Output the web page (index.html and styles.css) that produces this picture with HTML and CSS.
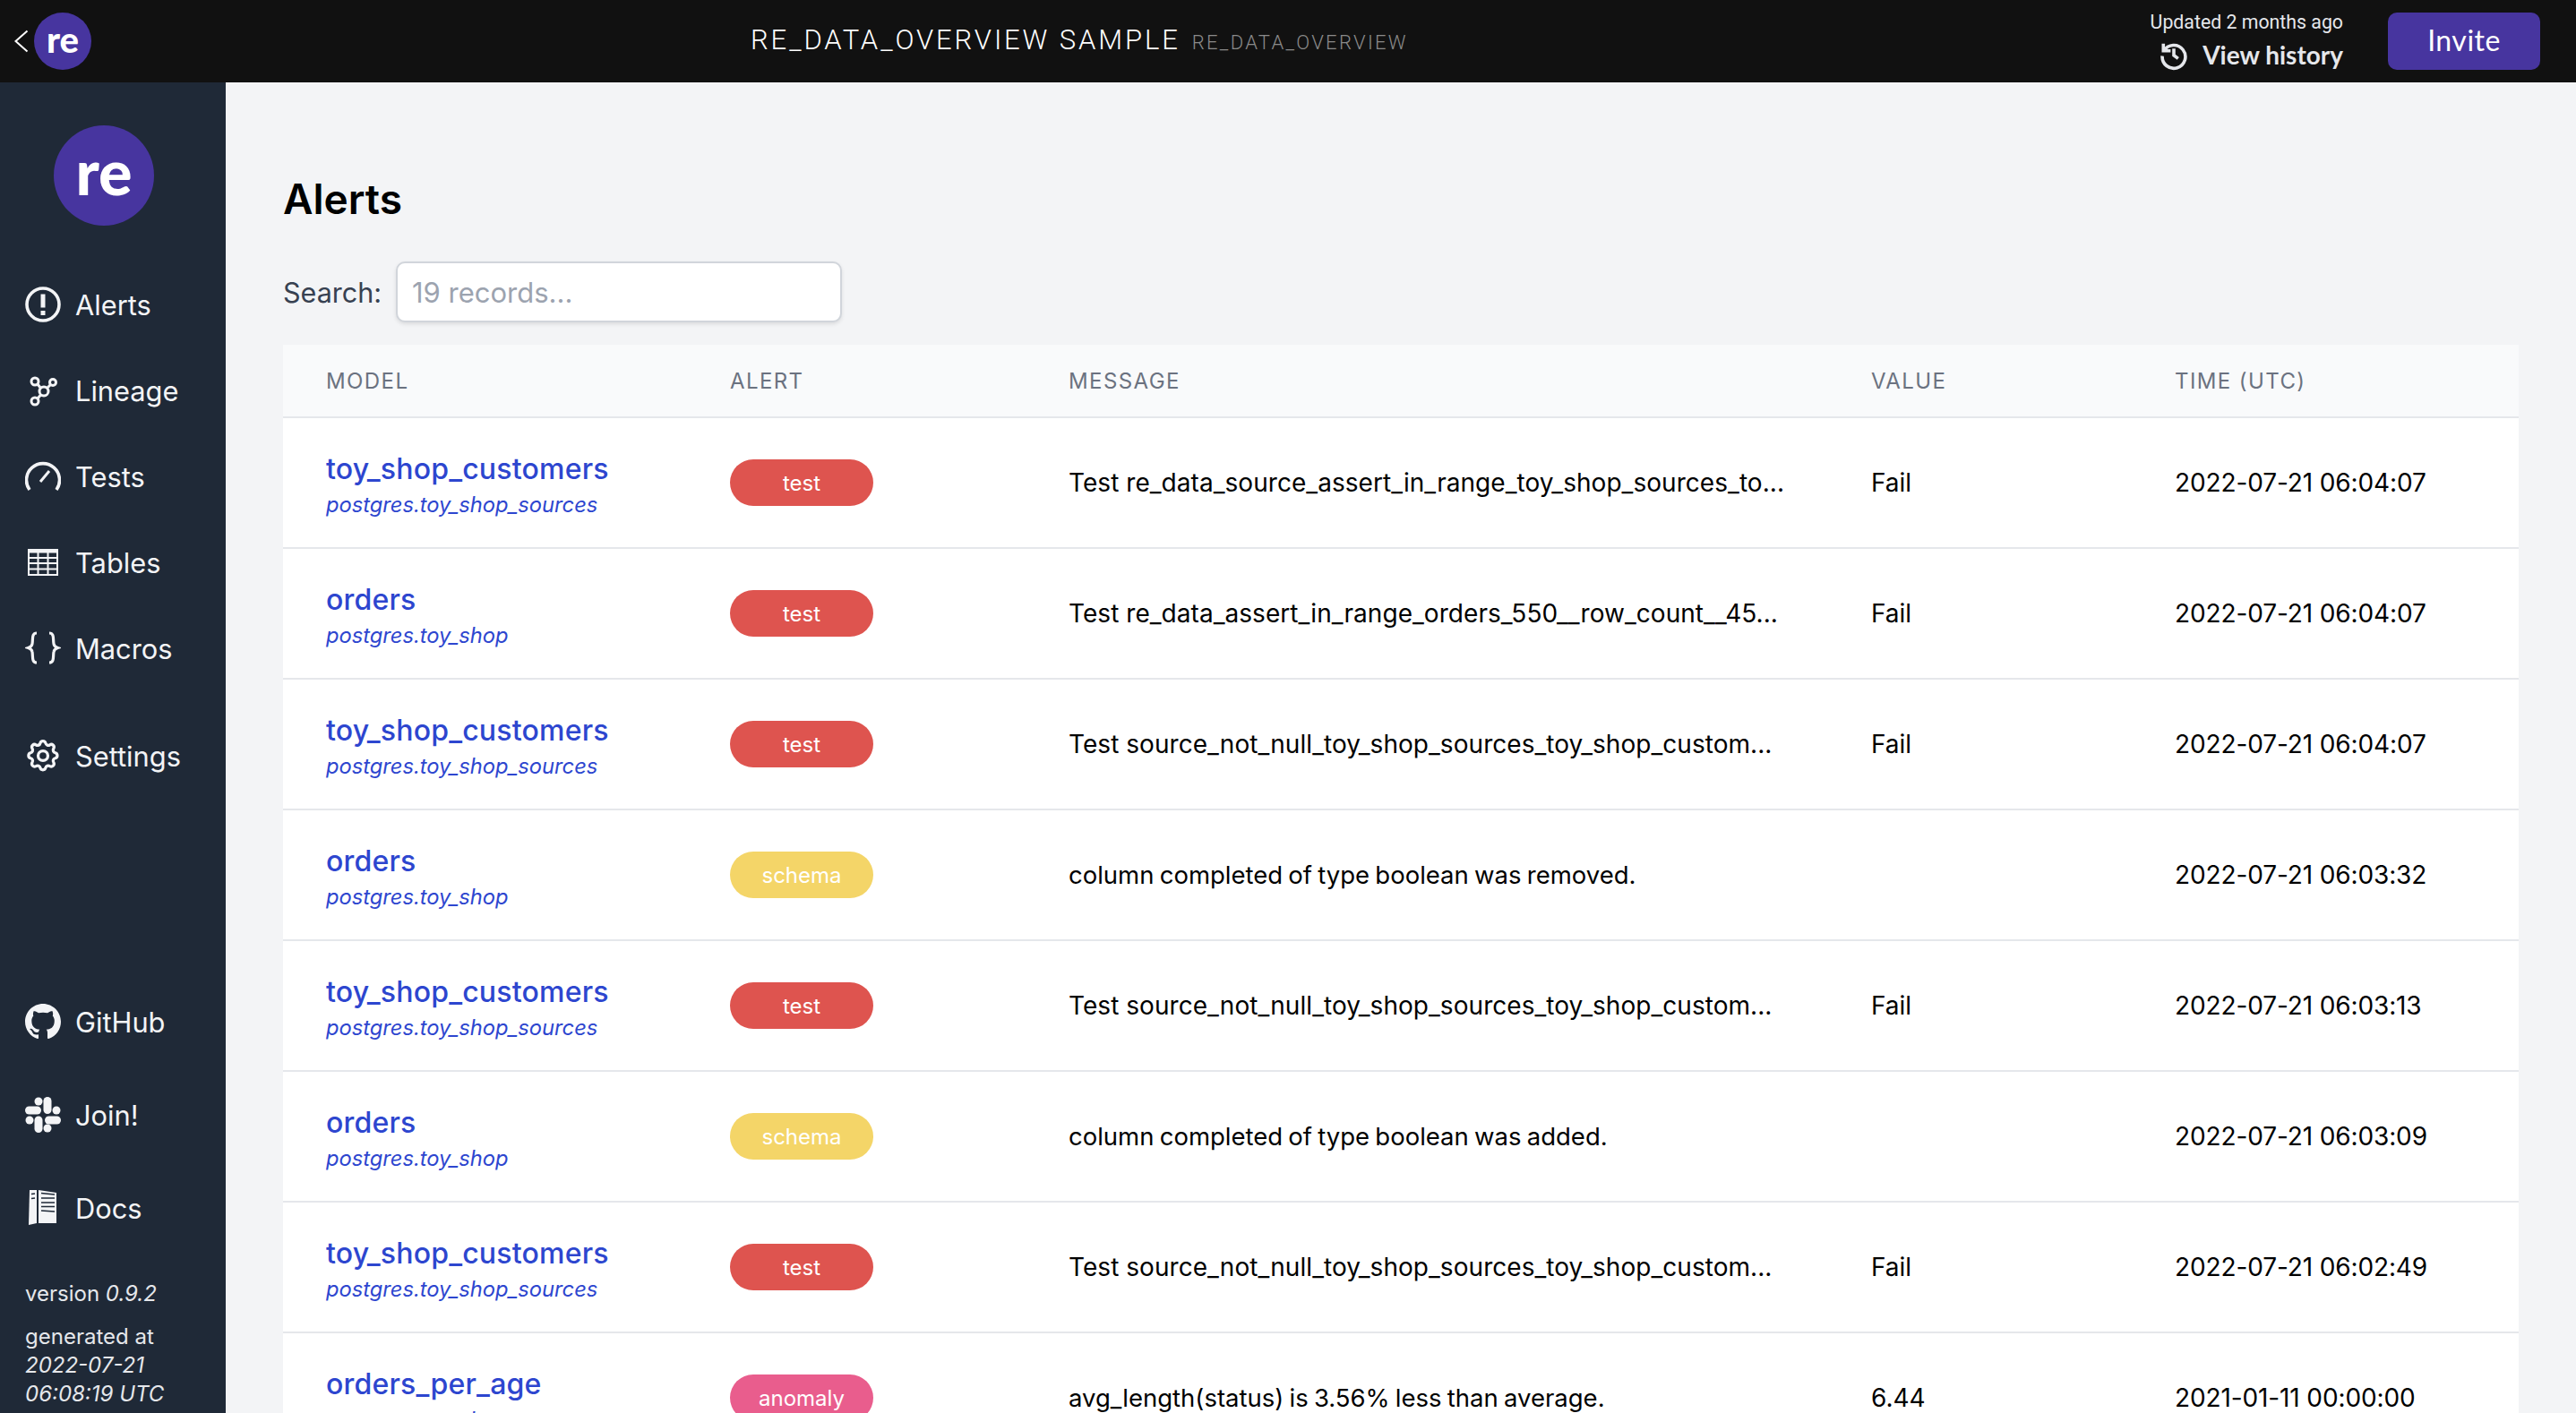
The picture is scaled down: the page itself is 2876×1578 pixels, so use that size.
FILE: index.html
```html
<!DOCTYPE html>
<html lang="en">
<head>
    <meta charset="UTF-8">
    <meta name="viewport" content="width=device-width, initial-scale=1.0">
    <title>re_data overview</title>
    <link rel="stylesheet" href="styles.css">
</head>
<body>

    <!-- Top bar -->
    <header class="topbar">
        <div class="topbar-left">
            <svg class="back-icon" viewBox="0 0 16 28"><path d="M14.500 2.500 L1.500 14 L14.500 25.500" fill="none" stroke="#fff" stroke-width="2"/></svg>
            <div class="logo logo-small">re</div>
        </div>
        <div class="topbar-title">
            <span class="title-main">RE_DATA_OVERVIEW SAMPLE</span>
            <span class="title-sub">RE_DATA_OVERVIEW</span>
        </div>
        <div class="topbar-right">
            <div class="updated">
                <div class="updated-text">Updated 2 months ago</div>
                <div class="history">
                    <svg class="history-icon" viewBox="0 0 24 24"><path d="M4.200 3.800v5.400h5.400M4.600 9.200A8.600 8.600 0 1 1 3.400 13M12 7.500V12.500l3.200 2.400" fill="none" stroke="#e5e7eb" stroke-width="2.400"/></svg>
                    <span>View history</span>
                </div>
            </div>
            <div class="invite">Invite</div>
        </div>
    </header>

    <div class="layout">
        <!-- Sidebar -->
        <aside class="sidebar">
            <div class="logo logo-big">re</div>

            <nav class="nav-group">
                <a class="nav-item">
                    <svg class="nav-icon" viewBox="0 0 40 40"><circle cx="20" cy="20" r="18" fill="none" stroke="#f3f4f6" stroke-width="3.600"/><path d="M20 8.500v15" stroke="#f3f4f6" stroke-width="5"/><path d="M17.500 27h5v5h-5z" fill="#f3f4f6"/></svg>
                    Alerts
                </a>
                <a class="nav-item">
                    <svg class="nav-icon" viewBox="0 0 40 40" fill="none" stroke="#f3f4f6" stroke-width="3"><circle cx="11" cy="10" r="4"/><circle cx="31" cy="11" r="3.500"/><circle cx="21" cy="21" r="5"/><circle cx="11" cy="32" r="4"/><path d="M14 13 17.500 17.500M28.500 13.500 24.500 17.500M17.500 25 14 29"/></svg>
                    Lineage
                </a>
                <a class="nav-item">
                    <svg class="nav-icon" viewBox="0 0 40 40" fill="none" stroke="#f3f4f6" stroke-width="3.600"><path d="M5 35A18.500 18.500 0 1 1 35 35"/><path d="M17 26 27 14" stroke-width="3"/></svg>
                    Tests
                </a>
                <a class="nav-item">
                    <svg class="nav-icon" viewBox="0 0 40 40" fill="none" stroke="#f3f4f6" stroke-width="2"><path d="M4 6h32v28H4z"/><path d="M4 7.500h32" stroke-width="4"/><path d="M4 15h32M4 21h32M4 27.500h32M14.500 7v27M25.500 7v27"/></svg>
                    Tables
                </a>
                <a class="nav-item">
                    <svg class="nav-icon" viewBox="0 0 40 40" fill="none" stroke="#f3f4f6" stroke-width="3.200"><path d="M13 3C7 3 9 10 8 15C7.500 18 5 19 3.500 19.500C5 20 7.500 21 8 24C9 29 7 36 13 36"/><path d="M27 3C33 3 31 10 32 15C32.500 18 35 19 36.500 19.500C35 20 32.500 21 32 24C31 29 33 36 27 36"/></svg>
                    Macros
                </a>
            </nav>

            <nav class="nav-group nav-settings">
                <a class="nav-item">
                    <svg class="nav-icon" viewBox="1 0 22 22" fill="none" stroke="#f3f4f6" stroke-width="1.800"><path d="M10.300 3.300c.4-1.700 2.900-1.700 3.300 0a1.700 1.700 0 0 0 2.600 1c1.500-.9 3.200.8 2.300 2.300a1.700 1.700 0 0 0 1 2.600c1.700.4 1.700 2.900 0 3.300a1.700 1.700 0 0 0-1 2.600c.9 1.500-.8 3.200-2.300 2.300a1.700 1.700 0 0 0-2.600 1c-.4 1.700-2.900 1.700-3.300 0a1.700 1.700 0 0 0-2.600-1c-1.500.9-3.200-.8-2.300-2.300a1.700 1.700 0 0 0-1-2.600c-1.700-.4-1.700-2.900 0-3.300a1.700 1.700 0 0 0 1-2.600c-.9-1.500.8-3.200 2.300-2.300a1.700 1.700 0 0 0 2.600-1z"/><circle cx="12" cy="11" r="3"/></svg>
                    Settings
                </a>
            </nav>

            <nav class="nav-group nav-links">
                <a class="nav-item">
                    <svg class="nav-icon" viewBox="0 0 16 16"><path fill="#f3f4f6" d="M8 0C3.580 0 0 3.580 0 8c0 3.540 2.290 6.530 5.470 7.590.4.070.55-.17.55-.38 0-.19-.01-.82-.01-1.490-2.010.37-2.530-.49-2.690-.94-.09-.23-.48-.94-.82-1.130-.28-.15-.68-.52-.01-.53.63-.01 1.080.58 1.230.82.720 1.210 1.870.870 2.330.660.070-.520.280-.870.510-1.070-1.780-.2-3.640-.890-3.640-3.950 0-.870.310-1.590.820-2.150-.080-.2-.360-1.020.080-2.120 0 0 .670-.210 2.200.820.640-.180 1.320-.270 2-.270s1.360.090 2 .270c1.530-1.040 2.200-.820 2.200-.820.440 1.100.160 1.920.080 2.120.510.560.820 1.270.820 2.150 0 3.070-1.870 3.750-3.650 3.950.290.250.540.730.540 1.480 0 1.070-.010 1.930-.010 2.200 0 .210.150.460.550.380A8.010 8.010 0 0 0 16 8c0-4.420-3.580-8-8-8z"/></svg>
                    GitHub
                </a>
                <a class="nav-item">
                    <svg class="nav-icon" viewBox="0 0 40 40" fill="#f3f4f6"><circle cx="15" cy="5" r="4.500"/><rect x="20.500" y="0" width="9" height="19" rx="4.500"/><rect x="0" y="10.500" width="18" height="9" rx="4.500"/><circle cx="35" cy="15" r="4.500"/><rect x="22" y="21.500" width="18" height="9" rx="4.500"/><rect x="10.500" y="21.500" width="9" height="18.500" rx="4.500"/><circle cx="5" cy="26" r="4.500"/><circle cx="25" cy="35" r="4.500"/></svg>
                    Join!
                </a>
                <a class="nav-item">
                    <svg class="nav-icon" viewBox="0 0 40 40"><path fill="#f3f4f6" d="M5 0h8v37l-9 2z"/><path fill="#f3f4f6" d="M15 0l20 3v34H15z"/><path stroke="#1f2937" stroke-width="1.500" d="M18 3.500l15 1.500M18 9h15M18 14h15M18 18.500h15M18 23l15 1M7 4.500l4-.5M7 9.500l4-.5"/></svg>
                    Docs
                </a>
            </nav>

            <div class="version">version <em>0.9.2</em></div>
            <div class="generated">generated at<br><em>2022-07-21</em><br><em>06:08:19 UTC</em></div>
        </aside>

        <!-- Main content -->
        <main class="content">
            <h1>Alerts</h1>
            <div class="search">
                <label for="search">Search:</label>
                <input type="text" id="search" placeholder="19 records...">
            </div>

            <table class="alerts">
                <colgroup>
                    <col class="col-model"><col class="col-alert"><col class="col-message"><col class="col-value"><col class="col-time">
                </colgroup>
                <thead>
                    <tr><th>Model</th><th>Alert</th><th>Message</th><th>Value</th><th>Time (UTC)</th></tr>
                </thead>
                <tbody>
                    <tr>
                        <td class="model"><a class="model-name">toy_shop_customers</a><a class="model-schema">postgres.toy_shop_sources</a></td>
                        <td><span class="badge badge-test">test</span></td>
                        <td class="test-message">Test re_data_source_assert_in_range_toy_shop_sources_to...</td>
                        <td>Fail</td>
                        <td class="time">2022-07-21 06:04:07</td>
                    </tr>
                    <tr>
                        <td class="model"><a class="model-name">orders</a><a class="model-schema">postgres.toy_shop</a></td>
                        <td><span class="badge badge-test">test</span></td>
                        <td class="test-message">Test re_data_assert_in_range_orders_550__row_count__45...</td>
                        <td>Fail</td>
                        <td class="time">2022-07-21 06:04:07</td>
                    </tr>
                    <tr>
                        <td class="model"><a class="model-name">toy_shop_customers</a><a class="model-schema">postgres.toy_shop_sources</a></td>
                        <td><span class="badge badge-test">test</span></td>
                        <td class="test-message">Test source_not_null_toy_shop_sources_toy_shop_custom...</td>
                        <td>Fail</td>
                        <td class="time">2022-07-21 06:04:07</td>
                    </tr>
                    <tr>
                        <td class="model"><a class="model-name">orders</a><a class="model-schema">postgres.toy_shop</a></td>
                        <td><span class="badge badge-schema">schema</span></td>
                        <td class="plain-message">column completed of type boolean was removed.</td>
                        <td></td>
                        <td class="time">2022-07-21 06:03:32</td>
                    </tr>
                    <tr>
                        <td class="model"><a class="model-name">toy_shop_customers</a><a class="model-schema">postgres.toy_shop_sources</a></td>
                        <td><span class="badge badge-test">test</span></td>
                        <td class="test-message">Test source_not_null_toy_shop_sources_toy_shop_custom...</td>
                        <td>Fail</td>
                        <td class="time">2022-07-21 06:03:13</td>
                    </tr>
                    <tr>
                        <td class="model"><a class="model-name">orders</a><a class="model-schema">postgres.toy_shop</a></td>
                        <td><span class="badge badge-schema">schema</span></td>
                        <td class="plain-message">column completed of type boolean was added.</td>
                        <td></td>
                        <td class="time">2022-07-21 06:03:09</td>
                    </tr>
                    <tr>
                        <td class="model"><a class="model-name">toy_shop_customers</a><a class="model-schema">postgres.toy_shop_sources</a></td>
                        <td><span class="badge badge-test">test</span></td>
                        <td class="test-message">Test source_not_null_toy_shop_sources_toy_shop_custom...</td>
                        <td>Fail</td>
                        <td class="time">2022-07-21 06:02:49</td>
                    </tr>
                    <tr>
                        <td class="model"><a class="model-name">orders_per_age</a><a class="model-schema">postgres.toy_shop</a></td>
                        <td><span class="badge badge-anomaly">anomaly</span></td>
                        <td class="plain-message">avg_length(status) is 3.56% less than average.</td>
                        <td>6.44</td>
                        <td class="time">2021-01-11 00:00:00</td>
                    </tr>
                </tbody>
            </table>
        </main>
    </div>

</body>
</html>
```

FILE: styles.css
```css
/* Base Reset */
* {
    margin: 0;
    padding: 0;
    box-sizing: border-box;
}

html,
body {
    height: 100%;
    overflow: hidden;
}

body {
    font-family: 'Inter', 'Liberation Sans', sans-serif;
    background-color: #f3f4f6;
    color: #000;
}

/* Top bar */
.topbar {
    height: 92px;
    background-color: #111111;
    display: flex;
    align-items: center;
    justify-content: space-between;
    padding: 0 40px 0 16px;
    position: relative;
}

.topbar-left {
    display: flex;
    align-items: center;
    gap: 6px;
}

.back-icon {
    width: 16px;
    height: 28px;
}

.logo {
    background-color: #47359f;
    color: #fff;
    border-radius: 50%;
    display: flex;
    align-items: center;
    justify-content: center;
    font-family: 'Lato', sans-serif;
    font-weight: 900;
}

.logo-small {
    width: 64px;
    height: 64px;
    font-size: 40px;
    padding-bottom: 4px;
}

.logo-big {
    width: 112px;
    height: 112px;
    font-size: 70px;
    padding-bottom: 10px;
    margin: 0 0 0 60px;
}

.topbar-title {
    position: absolute;
    left: 838px;
    top: 26px;
    display: flex;
    align-items: baseline;
    gap: 13px;
    font-family: 'Roboto', sans-serif;
    font-weight: 300;
}

.title-main {
    font-size: 31px;
    color: #fff;
    letter-spacing: 2.900px;
}

.title-sub {
    font-size: 22px;
    color: #8a8a8a;
    letter-spacing: 2.300px;
}

.topbar-right {
    display: flex;
    align-items: center;
    gap: 50px;
}

.updated {
    text-align: right;
    color: #e5e7eb;
}

.updated-text {
    font-family: 'Roboto', sans-serif;
    font-size: 21.300px;
    line-height: 24px;
    margin-bottom: 6px;
}

.history {
    display: flex;
    align-items: center;
    justify-content: flex-end;
    gap: 14px;
    font-family: 'Lato', sans-serif;
    font-weight: 700;
    font-size: 28px;
    line-height: 36px;
}

.history-icon {
    width: 36px;
    height: 36px;
}

.invite {
    width: 170px;
    height: 64px;
    padding-bottom: 4px;
    background-color: #47359f;
    border-radius: 10px;
    color: #fff;
    font-family: 'Lato', sans-serif;
    font-size: 32px;
    letter-spacing: 0.500px;
    display: flex;
    align-items: center;
    justify-content: center;
}

/* Layout */
.layout {
    display: flex;
    height: 1486px;
}

.sidebar {
    width: 252px;
    flex-shrink: 0;
    background-color: #1f2937;
    color: #f3f4f6;
    padding-top: 48px;
    overflow: hidden;
}

.nav-group {
    display: flex;
    flex-direction: column;
    gap: 48px;
    margin-top: 64px;
}

.nav-settings {
    margin-top: 72px;
}

.nav-links {
    margin-top: 249px;
    gap: 56px;
}

.nav-item {
    display: flex;
    align-items: center;
    gap: 16px;
    padding-left: 28px;
    height: 48px;
    font-size: 30.800px;
}

.nav-icon {
    width: 40px;
    height: 40px;
    flex-shrink: 0;
}

.version,
.generated {
    padding-left: 28px;
    font-size: 24px;
    line-height: 32px;
    color: #e5e7eb;
}

.version {
    margin-top: 56px;
}

.generated {
    margin-top: 16px;
}

/* Main content */
.content {
    flex: 1;
    padding: 100px 64px 0;
    overflow: hidden;
}

h1 {
    font-size: 46px;
    font-weight: 600;
    line-height: 60px;
}

.search {
    display: flex;
    align-items: center;
    gap: 16px;
    margin-top: 40px;
    font-size: 30.500px;
    color: #374151;
}

.search input {
    width: 498px;
    height: 68px;
    padding: 0 16px;
    border: 2px solid #d1d5db;
    border-radius: 10px;
    background-color: #fff;
    font-family: inherit;
    font-size: 31px;
    box-shadow: 0 2px 4px rgba(0, 0, 0, 0.1);
}

.search input::placeholder {
    color: #9ca3af;
}

/* Table */
.alerts {
    width: 2496px;
    margin-top: 25px;
    border-collapse: collapse;
    table-layout: fixed;
    background-color: #fff;
}

.col-model { width: 451px; }
.col-alert { width: 378px; }
.col-message { width: 896px; }
.col-value { width: 339px; }
.col-time { width: 432px; }

.alerts th {
    height: 81px;
    padding-left: 48px;
    text-align: left;
    font-size: 24px;
    font-weight: 400;
    letter-spacing: 1.400px;
    text-transform: uppercase;
    color: #6b7280;
    background-color: #f9fafb;
    border-bottom: 2px solid #e5e7eb;
}

.alerts td {
    height: 146px;
    padding-left: 48px;
    font-size: 28px;
    border-bottom: 2px solid #e5e7eb;
}

.alerts td.model {
    padding-top: 6px;
}

.alerts td.plain-message {
    font-size: 27.500px;
    word-spacing: -1.500px;
}

.test-message {
    letter-spacing: 0.050px;
}

.time {
    letter-spacing: -0.120px;
}

.model-name,
.model-schema {
    display: block;
    color: #2d46cf;
}

.model-name {
    font-size: 32px;
    font-weight: 500;
    line-height: 40px;
    letter-spacing: 0.200px;
}

.model-schema {
    font-size: 23.700px;
    font-style: italic;
    line-height: 32px;
    margin-top: 4px;
}

.badge {
    display: inline-flex;
    align-items: center;
    justify-content: center;
    width: 160px;
    height: 52px;
    border-radius: 26px;
    color: #fff;
    font-size: 24px;
    vertical-align: middle;
}

.badge-test {
    background-color: #de544f;
}

.badge-schema {
    background-color: #f4d568;
}

.badge-anomaly {
    background-color: #e95d8d;
}
```
